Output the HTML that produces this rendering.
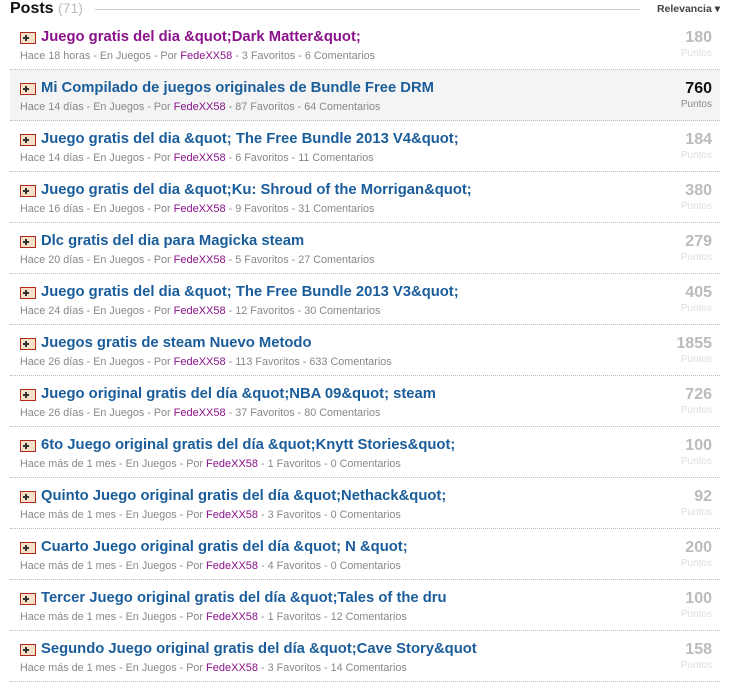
<!DOCTYPE html><html><head><meta charset="utf-8"><style>
body{margin:0;width:730px;height:678px;background:#fff;font-family:"Liberation Sans",Arial,sans-serif;overflow:hidden;position:relative}
.hd{position:absolute;left:10px;top:0px;font-size:16px;font-weight:bold;color:#111}
.hd span{color:#bbb;font-weight:normal;font-size:14px}
.line{position:absolute;left:95px;right:90px;top:9px;border-top:1px solid #ccc}
.rel{position:absolute;right:10px;top:3px;font-size:10.5px;color:#444;font-weight:bold}
.row{position:absolute;left:10px;width:710px;height:50px;border-bottom:1px dotted #bbb}
.row.hl{background:#f4f4f4}
.ic{position:absolute;left:10px;top:13px;width:14px;height:10px;border:1px solid #b52a1a;background:#f3e0c8}
.ic:before{content:"";position:absolute;left:2px;top:4px;width:6px;height:2px;background:#333}
.ic:after{content:"";position:absolute;left:4px;top:2px;width:2px;height:6px;background:#333}
.t{position:absolute;left:31px;top:10px;font-size:14.8px;font-weight:bold;color:#1b5d9b;white-space:nowrap}
.t.v{color:#8b128b}
.m{position:absolute;left:10px;top:31px;font-size:10.8px;color:#888;white-space:nowrap}
.m b{color:#8b128b;font-weight:normal;font-size:11px}
.n{position:absolute;right:8px;top:10px;font-size:16px;font-weight:bold;color:#bbb;text-align:right}
.p{position:absolute;right:8px;top:29px;font-size:10px;color:#ddd}
.hl .n{color:#111}.hl .p{color:#888}
</style></head><body>
<div class="hd">Posts <span>(71)</span></div><div class="line"></div><div class="rel">Relevancia ▾</div>
<div class="row" style="top:19px"><div class="ic"></div><div class="t v">Juego gratis del dia &amp;quot;Dark Matter&amp;quot;</div><div class="m">Hace 18 horas - En Juegos - Por <b>FedeXX58</b> - 3 Favoritos - 6 Comentarios</div><div class="n">180</div><div class="p">Puntos</div></div>
<div class="row hl" style="top:70px"><div class="ic"></div><div class="t">Mi Compilado de juegos originales de Bundle Free DRM</div><div class="m">Hace 14 días - En Juegos - Por <b>FedeXX58</b> - 87 Favoritos - 64 Comentarios</div><div class="n">760</div><div class="p">Puntos</div></div>
<div class="row" style="top:121px"><div class="ic"></div><div class="t">Juego gratis del dia &amp;quot; The Free Bundle 2013 V4&amp;quot;</div><div class="m">Hace 14 días - En Juegos - Por <b>FedeXX58</b> - 6 Favoritos - 11 Comentarios</div><div class="n">184</div><div class="p">Puntos</div></div>
<div class="row" style="top:172px"><div class="ic"></div><div class="t">Juego gratis del dia &amp;quot;Ku: Shroud of the Morrigan&amp;quot;</div><div class="m">Hace 16 días - En Juegos - Por <b>FedeXX58</b> - 9 Favoritos - 31 Comentarios</div><div class="n">380</div><div class="p">Puntos</div></div>
<div class="row" style="top:223px"><div class="ic"></div><div class="t">Dlc gratis del dia para Magicka steam</div><div class="m">Hace 20 días - En Juegos - Por <b>FedeXX58</b> - 5 Favoritos - 27 Comentarios</div><div class="n">279</div><div class="p">Puntos</div></div>
<div class="row" style="top:274px"><div class="ic"></div><div class="t">Juego gratis del dia &amp;quot; The Free Bundle 2013 V3&amp;quot;</div><div class="m">Hace 24 días - En Juegos - Por <b>FedeXX58</b> - 12 Favoritos - 30 Comentarios</div><div class="n">405</div><div class="p">Puntos</div></div>
<div class="row" style="top:325px"><div class="ic"></div><div class="t">Juegos gratis de steam Nuevo Metodo</div><div class="m">Hace 26 días - En Juegos - Por <b>FedeXX58</b> - 113 Favoritos - 633 Comentarios</div><div class="n">1855</div><div class="p">Puntos</div></div>
<div class="row" style="top:376px"><div class="ic"></div><div class="t">Juego original gratis del día &amp;quot;NBA 09&amp;quot; steam</div><div class="m">Hace 26 días - En Juegos - Por <b>FedeXX58</b> - 37 Favoritos - 80 Comentarios</div><div class="n">726</div><div class="p">Puntos</div></div>
<div class="row" style="top:427px"><div class="ic"></div><div class="t">6to Juego original gratis del día &amp;quot;Knytt Stories&amp;quot;</div><div class="m">Hace más de 1 mes - En Juegos - Por <b>FedeXX58</b> - 1 Favoritos - 0 Comentarios</div><div class="n">100</div><div class="p">Puntos</div></div>
<div class="row" style="top:478px"><div class="ic"></div><div class="t">Quinto Juego original gratis del día &amp;quot;Nethack&amp;quot;</div><div class="m">Hace más de 1 mes - En Juegos - Por <b>FedeXX58</b> - 3 Favoritos - 0 Comentarios</div><div class="n">92</div><div class="p">Puntos</div></div>
<div class="row" style="top:529px"><div class="ic"></div><div class="t">Cuarto Juego original gratis del día &amp;quot; N &amp;quot;</div><div class="m">Hace más de 1 mes - En Juegos - Por <b>FedeXX58</b> - 4 Favoritos - 0 Comentarios</div><div class="n">200</div><div class="p">Puntos</div></div>
<div class="row" style="top:580px"><div class="ic"></div><div class="t">Tercer Juego original gratis del día &amp;quot;Tales of the dru</div><div class="m">Hace más de 1 mes - En Juegos - Por <b>FedeXX58</b> - 1 Favoritos - 12 Comentarios</div><div class="n">100</div><div class="p">Puntos</div></div>
<div class="row" style="top:631px"><div class="ic"></div><div class="t">Segundo Juego original gratis del día &amp;quot;Cave Story&amp;quot</div><div class="m">Hace más de 1 mes - En Juegos - Por <b>FedeXX58</b> - 3 Favoritos - 14 Comentarios</div><div class="n">158</div><div class="p">Puntos</div></div>
</body></html>
